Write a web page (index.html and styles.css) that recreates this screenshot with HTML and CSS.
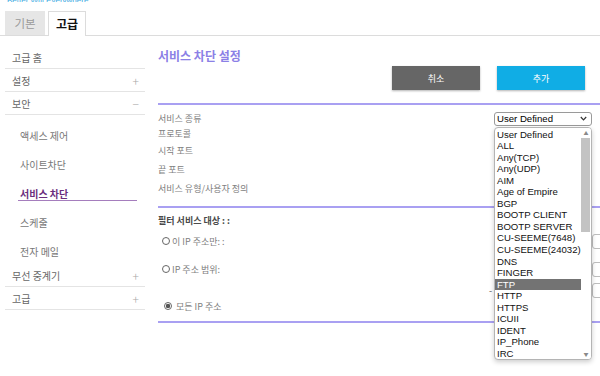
FILE: index.html
```html
<!DOCTYPE html>
<html>
<head>
  <title>고급 - 서비스 차단</title>
  <meta charset="utf-8">
  <meta name="viewport" content="width=device-width, initial-scale=1.0">
  <link rel="stylesheet" href="styles.css">
</head>
<body>
  <div class="brand">Better Wifi Everywhere</div>

  <div class="tabs">
    <div class="tab">기본</div>
    <div class="tab active">고급</div>
  </div>

  <div class="layout">
    <div class="sidebar">
      <div class="menu-item">고급 홈</div>
      <div class="menu-item">설정 <span class="toggle">+</span></div>
      <div class="menu-item">보안 <span class="toggle">&minus;</span></div>
      <div class="submenu">
        <div class="sub-item"><span>액세스 제어</span></div>
        <div class="sub-item"><span>사이트차단</span></div>
        <div class="sub-item active"><span>서비스 차단</span></div>
        <div class="sub-item"><span>스케줄</span></div>
        <div class="sub-item"><span>전자 메일</span></div>
      </div>
      <div class="menu-item">무선 중계기 <span class="toggle">+</span></div>
      <div class="menu-item">고급 <span class="toggle">+</span></div>
    </div>

    <div class="main">
      <h1>서비스 차단 설정</h1>

      <div class="actions">
        <button class="btn btn-cancel">취소</button>
        <button class="btn btn-add">추가</button>
      </div>

      <div class="divider"></div>

      <div class="form">
        <div class="row row-short">
          <span class="label">서비스 종류</span>
          <div class="select-wrap">
            <div class="select">
              <span>User Defined</span>
              <svg width="7" height="5" viewBox="0 0 7 5"><path d="M0.8 1 L3.5 3.8 L6.2 1" fill="none" stroke="#333" stroke-width="1.2"/></svg>
            </div>
            <!-- open option list -->
            <div class="dropdown">
              <div class="options">
                <div class="option">User Defined</div>
                <div class="option">ALL</div>
                <div class="option">Any(TCP)</div>
                <div class="option">Any(UDP)</div>
                <div class="option">AIM</div>
                <div class="option">Age of Empire</div>
                <div class="option">BGP</div>
                <div class="option">BOOTP CLIENT</div>
                <div class="option">BOOTP SERVER</div>
                <div class="option">CU-SEEME(7648)</div>
                <div class="option">CU-SEEME(24032)</div>
                <div class="option">DNS</div>
                <div class="option">FINGER</div>
                <div class="option selected">FTP</div>
                <div class="option">HTTP</div>
                <div class="option">HTTPS</div>
                <div class="option">ICUII</div>
                <div class="option">IDENT</div>
                <div class="option">IP_Phone</div>
                <div class="option">IRC</div>
              </div>
              <div class="scrollbar">
                <div class="arrow">&#9650;</div>
                <div class="arrow">&#9660;</div>
              </div>
            </div>
          </div>
        </div>
        <div class="row row-short"><span class="label">프로토콜</span></div>
        <div class="row"><span class="label">시작 포트</span></div>
        <div class="row"><span class="label">끝 포트</span></div>
        <div class="row"><span class="label">서비스 유형/사용자 정의</span></div>
      </div>

      <div class="divider tight"></div>

      <div class="filter">
        <div class="filter-title">필터 서비스 대상 : :</div>

        <div class="radio-row first">
          <label class="radio"><input type="radio" name="target"> 이 IP 주소만: :</label>
          <div class="ip-fields"><span class="ip-box"></span></div>
        </div>

        <div class="radio-row range">
          <label class="radio"><input type="radio" name="target"> IP 주소 범위:</label>
          <div class="ip-fields"><span class="ip-box"></span></div>
        </div>
        <div class="radio-row range-end">
          <span class="dash">-</span>
          <div class="ip-fields"><span class="ip-box"></span></div>
        </div>

        <div class="radio-row">
          <label class="radio all"><input type="radio" name="target" checked> 모든 IP 주소</label>
        </div>
      </div>

      <div class="divider bottom"></div>
    </div>
  </div>
</body>
</html>
```

FILE: styles.css
```css
html {
  height: 100%;
}

body {
  margin: 0;
  padding: 0;
  min-height: 100vh;
  font-family: "Noto Sans CJK KR", "Liberation Sans", sans-serif;
  background: #ffffff;
  color: #666;
  overflow: hidden;
}

.brand {
  font-family: "Liberation Sans", Arial, sans-serif;
  font-size: 8px;
  line-height: 8px;
  height: 5px;
  margin-top: -3px;
  padding-left: 7px;
  color: #3aa9e2;
  overflow: hidden;
}

.tabs {
  display: flex;
  gap: 3px;
  padding: 9px 0 0 5px;
  border-bottom: 1px solid #dcdcdc;
}

.tab {
  width: 40px;
  height: 24px;
  line-height: 24px;
  text-align: center;
  font-size: 11.5px;
  color: #9a9a9a;
  background: #e6e6e6;
  box-sizing: border-box;
}

.tab.active {
  width: 38px;
  background: #fff;
  color: #111;
  font-weight: bold;
  font-size: 12px;
  border: 1px solid #dcdcdc;
  border-bottom: none;
  margin-bottom: -1px;
  height: 25px;
}

.layout {
  display: flex;
}

/* left menu */
.sidebar {
  width: 145px;
  flex: none;
  padding: 10px 0 0 5px;
  box-sizing: border-box;
}

.menu-item {
  display: flex;
  justify-content: space-between;
  align-items: center;
  height: 23px;
  padding: 0 6px 0 7px;
  font-size: 10px;
  color: #666;
  border-bottom: 1px solid #e4e4e4;
  box-sizing: border-box;
}

.toggle {
  color: #a8a8a8;
  font-size: 12px;
  font-weight: 300;
}

.submenu {
  padding-top: 6px;
  margin-bottom: -2px;
}

.sub-item {
  height: 29px;
  padding: 8px 8px 0 13px;
  box-sizing: border-box;
  font-size: 10px;
  color: #777;
}

.sub-item span {
  display: block;
  line-height: 13px;
  padding-left: 2px;
}

.sub-item.active span {
  color: #6b2d7d;
  font-weight: bold;
  border-bottom: 1px solid #a57dbd;
}

/* main panel */
.main {
  flex: 1;
  padding-left: 13px;
  min-width: 0;
}

h1 {
  margin: 12px 0 0;
  font-size: 12px;
  line-height: 16px;
  font-weight: bold;
  color: #8b80e6;
}

.actions {
  display: flex;
  justify-content: flex-end;
  gap: 17px;
  padding-right: 15px;
  margin-top: 2px;
}

.btn {
  width: 88px;
  height: 24px;
  border: none;
  font-family: inherit;
  font-size: 9px;
  color: #fff;
  box-shadow: 0 1px 2px rgba(0, 0, 0, 0.3);
}

.btn-cancel {
  background: #666666;
}

.btn-add {
  background: #10ade5;
}

.divider {
  height: 2px;
  background: #a9a0f2;
  margin-top: 13px;
}

.divider.tight {
  margin-top: 8px;
}

.form {
  padding-top: 6px;
}

.row {
  display: flex;
  align-items: center;
  justify-content: space-between;
  height: 19px;
}

.row-short {
  height: 15px;
}

.label {
  font-size: 9px;
  color: #808080;
}

.select-wrap {
  position: relative;
  margin-right: 8px;
}

.select {
  width: 98px;
  height: 14px;
  box-sizing: border-box;
  border: 1px solid #9a9a9a;
  border-radius: 3px;
  display: flex;
  align-items: center;
  justify-content: space-between;
  padding: 0 4px 0 2px;
  font-family: "Liberation Sans", Arial, sans-serif;
  font-size: 9.6px;
  color: #000;
  background: #fff;
}

.dropdown {
  position: absolute;
  top: 15px;
  left: 0;
  width: 98px;
  height: 233px;
  box-sizing: border-box;
  border: 1px solid #b4b4b4;
  border-radius: 4px;
  background: #fff;
  box-shadow: 0 2px 5px rgba(0, 0, 0, 0.2);
  display: flex;
  overflow: hidden;
  z-index: 2;
}

.options {
  flex: 1;
  min-width: 0;
  padding-top: 1px;
}

.option {
  height: 11.55px;
  line-height: 11.55px;
  padding-left: 2px;
  font-family: "Liberation Sans", Arial, sans-serif;
  font-size: 9.6px;
  color: #111;
  white-space: nowrap;
}

.option.selected {
  background: #737373;
  color: #fff;
}

.scrollbar {
  width: 10px;
  flex: none;
  display: flex;
  flex-direction: column;
  justify-content: space-between;
  background: linear-gradient(#c3c3c3, #c3c3c3) no-repeat 0 10px / 9px 94px, #ffffff;
}

.arrow {
  height: 10px;
  font-size: 5px;
  line-height: 10px;
  text-align: center;
  color: #8a8a8a;
}

.filter {
  margin-top: 5px;
}

.filter-title {
  font-size: 9px;
  line-height: 16px;
  font-weight: bold;
  color: #4a4a4a;
}

.radio-row {
  display: flex;
  align-items: center;
  height: 16px;
}

.radio-row.first {
  margin-top: 4px;
}

.radio-row.range {
  margin-top: 12px;
}

.radio-row.range-end {
  margin-top: 5px;
}

.radio {
  display: flex;
  align-items: center;
  gap: 2px;
  font-size: 9px;
  color: #808080;
  padding-left: 4px;
}

.radio.all {
  padding-left: 6px;
  gap: 4px;
}

.radio input {
  appearance: none;
  -webkit-appearance: none;
  width: 8px;
  height: 8px;
  margin: 0;
  border: 1px solid #666;
  border-radius: 50%;
  box-sizing: border-box;
  background: #fff;
}

.radio input:checked {
  background: radial-gradient(circle, #555 0 2px, #fff 2.4px);
}

.ip-fields {
  margin-left: auto;
  width: 8px;
  min-width: 0;
  flex: none;
  display: flex;
}

.ip-box {
  flex: none;
  width: 40px;
  height: 15px;
  border: 1px solid #bdbdbd;
  border-radius: 3px;
  box-sizing: border-box;
}

.dash {
  margin-left: auto;
  margin-right: 100px;
  font-size: 9px;
  color: #555;
}

.range-end .ip-fields {
  margin-left: 0;
}

.divider.bottom {
  margin-top: 7px;
}
```
